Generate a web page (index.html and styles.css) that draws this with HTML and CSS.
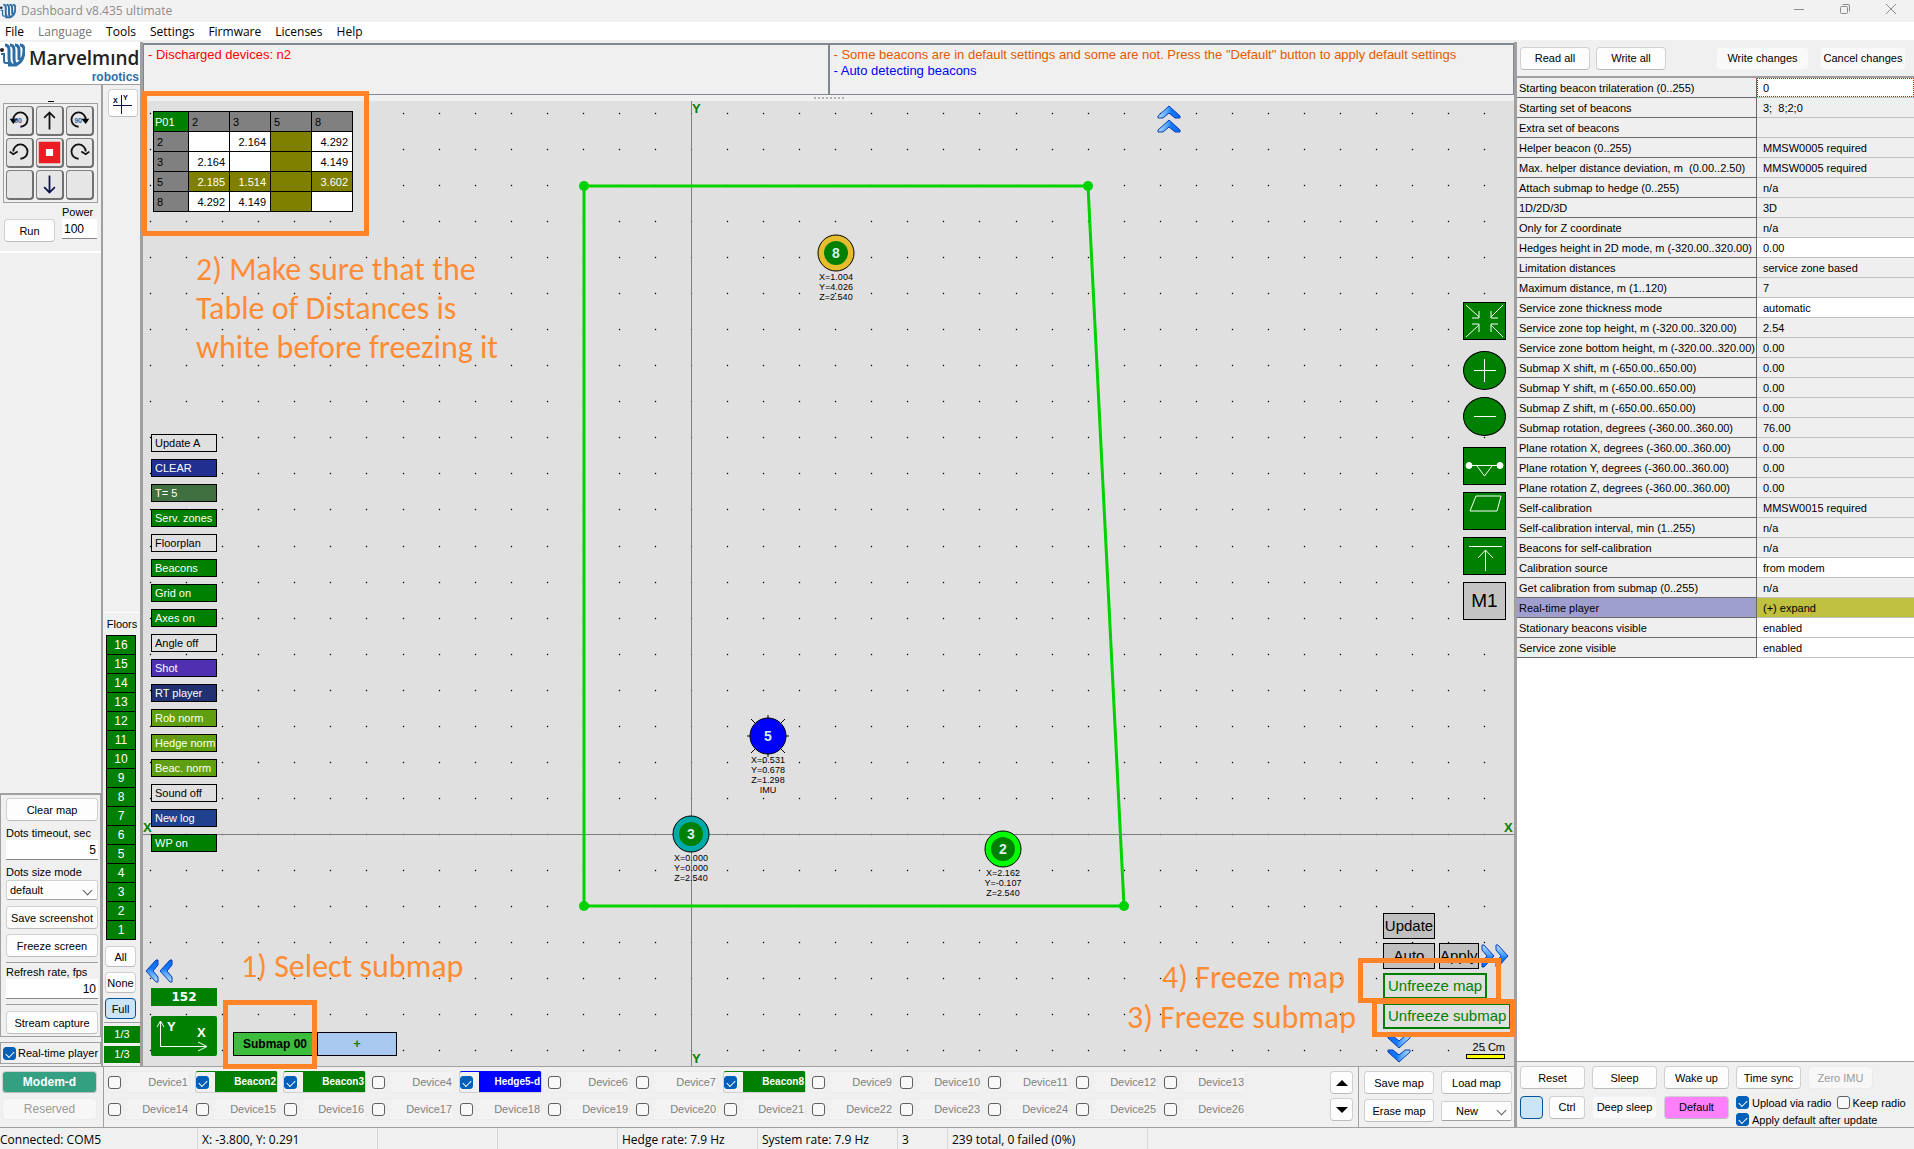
FILE: index.html
```html
<!DOCTYPE html>
<html lang="en">
<head>
    <meta charset="UTF-8">
    <meta name="viewport" content="width=device-width, initial-scale=1.0">
    <title>Dashboard v8.435 ultimate</title>
    <link rel="stylesheet" href="styles.css">
</head>
<body>

    <svg class="defs" aria-hidden="true">
        <linearGradient id="blue" x1="0" x2="1" y1="0" y2="0">
            <stop offset="0" stop-color="#b4dcff"/>
            <stop offset="0.45" stop-color="#4aa0ff"/>
            <stop offset="0.6" stop-color="#1478f5"/>
            <stop offset="1" stop-color="#0a6cff"/>
        </linearGradient>
        <symbol id="chevrons" viewBox="0 0 24 28">
            <path d="M1 11 L12 1 L23 11 V13 H18 L12 8 L6 13 H1 Z" fill="url(#blue)" stroke="#0a3cb4"/>
            <path d="M1 25 L12 15 L23 25 V27 H18 L12 22 L6 27 H1 Z" fill="url(#blue)" stroke="#0a3cb4"/>
        </symbol>
        <symbol id="logo" viewBox="0 0 25 24">
            <circle cx="2" cy="7" r="2" fill="#222"/>
            <path d="M1 11 H4 V18 Q4 20 6 20 H9" fill="none" stroke="#2f6ea5" stroke-width="2"/>
            <path d="M5 2 Q9 2 9 7 V15 Q9 21 12 21 M10 2 Q14 2 14 7 V15 Q14 21 17 21 M15 2 Q19 2 19 7 V17 M20 2 Q24 2 24 7 Q24 18 16 22 H8" fill="none" stroke="#2f6ea5" stroke-width="3"/>
        </symbol>
    </svg>

    <header class="titlebar">
        <svg class="title-icon"><use href="#logo"/></svg>
        <span class="title">Dashboard v8.435 ultimate</span>
        <button class="win-btn" aria-label="Minimize"><svg width="12" height="12"><path d="M1 6.5H11"/></svg></button>
        <button class="win-btn" aria-label="Restore"><svg width="12" height="12"><rect x="1.5" y="3.5" width="7" height="7" rx="1"/><path d="M3.500 1.500H9Q10.500 1.500 10.500 3V8.500"/></svg></button>
        <button class="win-btn" aria-label="Close"><svg width="12" height="12"><path d="M1 1L11 11M11 1L1 11"/></svg></button>
    </header>

    <nav class="menu">
        <a href="#">File</a>
        <a href="#" class="muted">Language</a>
        <a href="#">Tools</a>
        <a href="#">Settings</a>
        <a href="#">Firmware</a>
        <a href="#">Licenses</a>
        <a href="#">Help</a>
    </nav>

    <main class="main">
        <div class="work">
            <div class="upper">

                <aside class="sidebar">
                    <div class="brand">
                        <svg class="brand-icon"><use href="#logo"/></svg>
                        <div class="brand-name">Marvelmınd<small>robotics</small></div>
                    </div>
                    <div class="columns">
                        <div class="tools">
                            <div class="robot">
                                <div class="dash"></div>
                                <div class="pad">
                                    <button aria-label="Turn left 90"><svg viewBox="0 0 28 30"><path d="M7 14A8 8 0 1 1 15 22" class="arc"/><path d="M3 13H12L7 19Z"/><text x="8" y="18">90</text></svg></button>
                                    <button aria-label="Forward"><svg viewBox="0 0 28 30"><path d="M14 25V7M8 12L14 6L20 12" class="arc"/></svg></button>
                                    <button aria-label="Turn right 90"><svg viewBox="0 0 28 30"><path d="M21 14A8 8 0 1 0 13 22" class="arc"/><path d="M25 13H16L21 19Z"/><text x="8" y="18">90</text></svg></button>
                                    <button aria-label="Turn left"><svg viewBox="0 0 28 30"><path d="M7 14A8 8 0 1 1 15 22" class="arc"/><path d="M3 14L7 17L12 14" class="arc"/></svg></button>
                                    <button aria-label="Stop"><svg viewBox="0 0 28 30"><path d="M2 3H26V27H2Z" fill="#ed1c24"/><path d="M10 11H18V19H10Z" fill="#fff"/></svg></button>
                                    <button aria-label="Turn right"><svg viewBox="0 0 28 30"><path d="M21 14A8 8 0 1 0 13 22" class="arc"/><path d="M25 14L21 17L16 14" class="arc"/></svg></button>
                                    <button aria-label="Left"></button>
                                    <button aria-label="Back"><svg viewBox="0 0 28 30"><path d="M14 5V23M8 18L14 24L20 18" class="arc navy"/></svg></button>
                                    <button aria-label="Right"></button>
                                </div>
                                <div class="run">
                                    <label for="power">Power</label>
                                    <button class="btn">Run</button>
                                    <input id="power" type="text" value="100">
                                </div>
                            </div>
                            <div class="spacer"></div>
                            <div class="view">
                                <button class="btn">Clear map</button>
                                <label for="timeout">Dots timeout, sec</label>
                                <input id="timeout" type="text" value="5">
                                <label for="size">Dots size mode</label>
                                <div class="select"><select id="size"><option>default</option></select></div>
                                <button class="btn">Save screenshot</button>
                                <button class="btn">Freeze screen</button>
                                <hr>
                                <label for="rate">Refresh rate, fps</label>
                                <input id="rate" type="text" value="10">
                                <hr>
                                <button class="btn">Stream capture</button>
                            </div>
                            <label class="player"><input type="checkbox" checked> Real-time player</label>
                        </div>

                        <div class="floors">
                            <button class="btn axes-btn" aria-label="Axes"><svg width="28" height="26"><path d="M4 15.500H23M12.500 5V24" stroke="#101050"/><text x="4" y="13">X</text><text x="14" y="10">Y</text></svg></button>
                            <div class="spacer"></div>
                            <div class="floor-title">Floors</div>
                            <div class="floor-list">
                                <button>16</button>
                                <button>15</button>
                                <button>14</button>
                                <button>13</button>
                                <button>12</button>
                                <button>11</button>
                                <button>10</button>
                                <button>9</button>
                                <button>8</button>
                                <button>7</button>
                                <button>6</button>
                                <button>5</button>
                                <button>4</button>
                                <button>3</button>
                                <button>2</button>
                                <button>1</button>
                            </div>
                            <div class="floor-modes">
                                <button class="btn">All</button>
                                <button class="btn">None</button>
                                <button class="btn pressed">Full</button>
                            </div>
                            <div class="pages">
                                <span>1/3</span>
                                <span>1/3</span>
                            </div>
                        </div>
                    </div>
                </aside>

                <section class="center">
                    <div class="messages">
                        <div class="message red">- Discharged devices: n2</div>
                        <div class="message">
                            <p class="orange">- Some beacons are in default settings and some are not. Press the "Default" button to apply default settings</p>
                            <p class="blue">- Auto detecting beacons</p>
                        </div>
                    </div>
                    <div class="splitter"><i></i></div>

                    <div class="map">
                        <svg class="scene">
                            <path id="grid" fill="#000" stroke="#000" stroke-opacity="0.3"/>
                            <path d="M548.500 0V966M0 733.500H1371" stroke="#808080"/>
                            <path d="M441 85H945L981 805H441Z" fill="none" stroke="#00d200" stroke-width="3"/>
                            <g fill="#00d200">
                                <circle cx="441" cy="85" r="5"/>
                                <circle cx="945" cy="85" r="5"/>
                                <circle cx="981" cy="805" r="5"/>
                                <circle cx="441" cy="805" r="5"/>
                            </g>
                            <g class="beacon">
                                <circle cx="693" cy="152" r="18" fill="#e6bd2d" stroke="#000"/>
                                <circle cx="693" cy="152" r="12" fill="#008000"/>
                                <text x="693" y="157" class="num">8</text>
                                <text x="693" y="179">X=1.004</text>
                                <text x="693" y="189">Y=4.026</text>
                                <text x="693" y="199">Z=2.540</text>
                            </g>
                            <g class="beacon">
                                <path d="M604 635H646M625 614V656M608 618L642 652M642 618L608 652" stroke="#000"/>
                                <circle cx="625" cy="635" r="18" fill="#0000ff" stroke="#000"/>
                                <text x="625" y="640" class="num">5</text>
                                <text x="625" y="662">X=0.531</text>
                                <text x="625" y="672">Y=0.678</text>
                                <text x="625" y="682">Z=1.298</text>
                                <text x="625" y="692">IMU</text>
                            </g>
                            <g class="beacon">
                                <circle cx="548" cy="733" r="18" fill="#00aaaa" stroke="#000"/>
                                <circle cx="548" cy="733" r="12" fill="#008000"/>
                                <text x="548" y="738" class="num">3</text>
                                <text x="548" y="760">X=0.000</text>
                                <text x="548" y="770">Y=0.000</text>
                                <text x="548" y="780">Z=2.540</text>
                            </g>
                            <g class="beacon">
                                <circle cx="860" cy="748" r="18" fill="#00ff00" stroke="#000"/>
                                <circle cx="860" cy="748" r="12" fill="#008000"/>
                                <text x="860" y="753" class="num">2</text>
                                <text x="860" y="775">X=2.162</text>
                                <text x="860" y="785">Y=-0.107</text>
                                <text x="860" y="795">Z=2.540</text>
                            </g>
                            <g class="axis">
                                <text x="549" y="12">Y</text>
                                <text x="549" y="962">Y</text>
                                <text x="0" y="731">X</text>
                                <text x="1361" y="731">X</text>
                            </g>
                        </svg>

                        <table class="distances">
                            <tr><th class="corner">P01</th><th>2</th><th>3</th><th>5</th><th>8</th></tr>
                            <tr><th>2</th><td></td><td>2.164</td><td class="off"></td><td>4.292</td></tr>
                            <tr><th>3</th><td>2.164</td><td></td><td class="off"></td><td>4.149</td></tr>
                            <tr><th>5</th><td class="off">2.185</td><td class="off">1.514</td><td class="off"></td><td class="off">3.602</td></tr>
                            <tr><th>8</th><td>4.292</td><td>4.149</td><td class="off"></td><td></td></tr>
                        </table>

                        <button class="scroll up" aria-label="Scroll up"><svg width="24" height="28"><use href="#chevrons"/></svg></button>
                        <button class="scroll left" aria-label="Scroll left"><svg width="28" height="24"><g transform="translate(0 24) rotate(-90)"><use href="#chevrons" width="24" height="28"/></g></svg></button>
                        <button class="scroll down" aria-label="Scroll down"><svg width="24" height="28"><g transform="translate(24 28) rotate(180)"><use href="#chevrons" width="24" height="28"/></g></svg></button>

                        <div class="modes">
                            <button>Update A</button>
                            <button class="c-clear">CLEAR</button>
                            <button class="c-time">T= 5</button>
                            <button class="c-green">Serv. zones</button>
                            <button>Floorplan</button>
                            <button class="c-green">Beacons</button>
                            <button class="c-green">Grid on</button>
                            <button class="c-green">Axes on</button>
                            <button>Angle off</button>
                            <button class="c-shot">Shot</button>
                            <button class="c-rt">RT player</button>
                            <button class="c-norm">Rob norm</button>
                            <button class="c-norm">Hedge norm</button>
                            <button class="c-norm">Beac. norm</button>
                            <button>Sound off</button>
                            <button class="c-log">New log</button>
                            <button class="c-green">WP on</button>
                        </div>

                        <div class="bottom-left">
                            <div class="orient">
                                <span class="counter">152</span>
                                <button class="orient-btn" aria-label="Axes orientation">
                                    <svg width="65" height="40"><path d="M9.500 5V30.500H56M6 11L9.500 5L13 11M47 26L56 30.500L47 35" fill="none" stroke="#fff"/><text x="16" y="15">Y</text><text x="46" y="21">X</text></svg>
                                </button>
                            </div>
                            <button class="submap">Submap 00</button>
                            <button class="submap add">+</button>
                        </div>

                        <div class="side-tools">
                            <button aria-label="Fit"><svg width="41" height="36"><path d="M2 2L15 14M8 15H15V8M39 2L27 14M27 8V15H34M2 34L15 22M8 21H15V29M39 34L27 22M34 21H27V29"/></svg></button>
                            <button class="round" aria-label="Zoom in"><svg width="41" height="37"><path d="M10 18.500H32M20.500 7V30"/></svg></button>
                            <button class="round" aria-label="Zoom out"><svg width="41" height="37"><path d="M10 18.500H32"/></svg></button>
                            <button aria-label="Measure"><svg width="41" height="36"><path d="M5 17.500H36M13 18L20.500 28L28 18"/><circle cx="5" cy="17.500" r="3" fill="#fff"/><circle cx="36" cy="17.500" r="3" fill="#fff"/></svg></button>
                            <button aria-label="Plane"><svg width="41" height="36"><path d="M12 3H37L33 18H6Z"/></svg></button>
                            <button aria-label="Move up"><svg width="41" height="36"><path d="M5 8.500H38M21.500 33V12M14 20L21.500 12L29 20"/></svg></button>
                            <button class="m1">M1</button>
                        </div>

                        <div class="freeze">
                            <div class="row"><button class="wide">Update</button></div>
                            <div class="row">
                                <button class="wide">Auto</button>
                                <button>Apply</button>
                                <button class="scroll" aria-label="Scroll right"><svg width="28" height="24"><g transform="translate(28 0) rotate(90)"><use href="#chevrons" width="24" height="28"/></g></svg></button>
                            </div>
                            <div class="row"><button class="frozen">Unfreeze map</button></div>
                            <div class="row"><button class="frozen">Unfreeze submap</button></div>
                        </div>

                        <div class="scale">25 Cm<i></i></div>

                        <div class="frame frame-table"></div>
                        <div class="frame frame-submap"></div>
                        <div class="frame frame-map"></div>
                        <div class="frame frame-freeze"></div>
                        <p class="note note-table">2) Make sure that the<br>Table of Distances is<br>white before freezing it</p>
                        <p class="note note-select">1) Select submap</p>
                        <p class="note note-map">4) Freeze map</p>
                        <p class="note note-submap">3) Freeze submap</p>
                    </div>
                </section>
            </div>

            <footer class="devices">
                <div class="modem">
                    <button class="btn modem-on">Modem-d</button>
                    <button class="btn" disabled>Reserved</button>
                </div>
                <div class="device-grid">
                    <label class="device"><input type="checkbox"><span>Device1</span></label>
                    <label class="device on"><input type="checkbox" checked><span>Beacon2</span></label>
                    <label class="device on"><input type="checkbox" checked><span>Beacon3</span></label>
                    <label class="device"><input type="checkbox"><span>Device4</span></label>
                    <label class="device on hedge"><input type="checkbox" checked><span>Hedge5-d</span></label>
                    <label class="device"><input type="checkbox"><span>Device6</span></label>
                    <label class="device"><input type="checkbox"><span>Device7</span></label>
                    <label class="device on"><input type="checkbox" checked><span>Beacon8</span></label>
                    <label class="device"><input type="checkbox"><span>Device9</span></label>
                    <label class="device"><input type="checkbox"><span>Device10</span></label>
                    <label class="device"><input type="checkbox"><span>Device11</span></label>
                    <label class="device"><input type="checkbox"><span>Device12</span></label>
                    <label class="device"><input type="checkbox"><span>Device13</span></label>
                    <label class="device"><input type="checkbox"><span>Device14</span></label>
                    <label class="device"><input type="checkbox"><span>Device15</span></label>
                    <label class="device"><input type="checkbox"><span>Device16</span></label>
                    <label class="device"><input type="checkbox"><span>Device17</span></label>
                    <label class="device"><input type="checkbox"><span>Device18</span></label>
                    <label class="device"><input type="checkbox"><span>Device19</span></label>
                    <label class="device"><input type="checkbox"><span>Device20</span></label>
                    <label class="device"><input type="checkbox"><span>Device21</span></label>
                    <label class="device"><input type="checkbox"><span>Device22</span></label>
                    <label class="device"><input type="checkbox"><span>Device23</span></label>
                    <label class="device"><input type="checkbox"><span>Device24</span></label>
                    <label class="device"><input type="checkbox"><span>Device25</span></label>
                    <label class="device"><input type="checkbox"><span>Device26</span></label>
                </div>
                <div class="arrows">
                    <button class="btn" aria-label="Previous devices"><svg width="12" height="8"><path d="M0 7L6 1L12 7Z"/></svg></button>
                    <button class="btn" aria-label="Next devices"><svg width="12" height="8"><path d="M0 1L6 7L12 1Z"/></svg></button>
                </div>
                <div class="map-actions">
                    <button class="btn">Save map</button>
                    <button class="btn">Load map</button>
                    <button class="btn">Erase map</button>
                    <div class="select"><select aria-label="Map"><option>New</option></select></div>
                </div>
            </footer>
        </div>

        <aside class="settings">
            <div class="settings-top">
                <button class="btn">Read all</button>
                <button class="btn">Write all</button>
                <button class="btn flat write">Write changes</button>
                <button class="btn flat cancel">Cancel changes</button>
            </div>
            <div class="params">
                <table>
                    <tr><th><label for="start">Starting beacon trilateration (0..255)</label></th><td class="edit"><input id="start" type="text" value="0"></td></tr>
                    <tr><th>Starting set of beacons</th><td>3;&nbsp; 8;2;0</td></tr>
                    <tr><th>Extra set of beacons</th><td></td></tr>
                    <tr><th>Helper beacon (0..255)</th><td>MMSW0005 required</td></tr>
                    <tr><th>Max. helper distance deviation, m&nbsp; (0.00..2.50)</th><td>MMSW0005 required</td></tr>
                    <tr><th>Attach submap to hedge (0..255)</th><td>n/a</td></tr>
                    <tr><th>1D/2D/3D</th><td>3D</td></tr>
                    <tr><th>Only for Z coordinate</th><td>n/a</td></tr>
                    <tr><th>Hedges height in 2D mode, m (-320.00..320.00)</th><td class="edit">0.00</td></tr>
                    <tr><th>Limitation distances</th><td>service zone based</td></tr>
                    <tr><th>Maximum distance, m (1..120)</th><td>7</td></tr>
                    <tr><th>Service zone thickness mode</th><td class="edit">automatic</td></tr>
                    <tr><th>Service zone top height, m (-320.00..320.00)</th><td>2.54</td></tr>
                    <tr><th>Service zone bottom height, m (-320.00..320.00)</th><td>0.00</td></tr>
                    <tr><th>Submap X shift, m (-650.00..650.00)</th><td>0.00</td></tr>
                    <tr><th>Submap Y shift, m (-650.00..650.00)</th><td>0.00</td></tr>
                    <tr><th>Submap Z shift, m (-650.00..650.00)</th><td>0.00</td></tr>
                    <tr><th>Submap rotation, degrees (-360.00..360.00)</th><td>76.00</td></tr>
                    <tr><th>Plane rotation X, degrees (-360.00..360.00)</th><td>0.00</td></tr>
                    <tr><th>Plane rotation Y, degrees (-360.00..360.00)</th><td>0.00</td></tr>
                    <tr><th>Plane rotation Z, degrees (-360.00..360.00)</th><td>0.00</td></tr>
                    <tr><th>Self-calibration</th><td>MMSW0015 required</td></tr>
                    <tr><th>Self-calibration interval, min (1..255)</th><td>n/a</td></tr>
                    <tr><th>Beacons for self-calibration</th><td>n/a</td></tr>
                    <tr><th>Calibration source</th><td class="edit">from modem</td></tr>
                    <tr><th>Get calibration from submap (0..255)</th><td>n/a</td></tr>
                    <tr class="group"><th>Real-time player</th><td>(+) expand</td></tr>
                    <tr><th>Stationary beacons visible</th><td class="edit">enabled</td></tr>
                    <tr><th>Service zone visible</th><td class="edit">enabled</td></tr>
                </table>
            </div>
            <div class="commands">
                <button class="btn">Reset</button>
                <button class="btn">Sleep</button>
                <button class="btn">Wake up</button>
                <button class="btn">Time sync</button>
                <button class="btn" disabled>Zero IMU</button>
                <div class="pair">
                    <button class="btn pressed" aria-label="Mode"></button>
                    <button class="btn">Ctrl</button>
                </div>
                <button class="btn flat">Deep sleep</button>
                <button class="btn pink">Default</button>
                <div class="options">
                    <label><input type="checkbox" checked> Upload via radio</label>
                    <label><input type="checkbox"> Keep radio</label>
                    <label><input type="checkbox" checked> Apply default after update</label>
                </div>
            </div>
        </aside>
    </main>

    <footer class="status">
        <span class="s1">Connected: COM5</span>
        <span class="s2">X: -3.800, Y: 0.291</span>
        <span class="s3"></span>
        <span class="s3"></span>
        <span class="s4">Hedge rate: 7.9 Hz</span>
        <span class="s4">System rate: 7.9 Hz</span>
        <span class="s5">3</span>
        <span class="s6">239 total, 0 failed (0%)</span>
    </footer>

    <script>
        // grid dots every 25 cm around the origin
        const origin = { x: 548, y: 733 };
        const step = 36.06;
        let d = '';
        for (let i = -15; i <= 22; i++) {
            for (let j = -20; j <= 6; j++) {
                const x = origin.x + Math.round(i * step);
                const y = origin.y + Math.round(j * step);
                d += `M${x} ${y}h1v1h-1z`;
            }
        }
        document.getElementById('grid').setAttribute('d', d);
    </script>

</body>
</html>
```
FILE: styles.css
```css
* {
    box-sizing: border-box;
}

body {
    margin: 0;
    height: 100vh;
    display: flex;
    flex-direction: column;
    overflow: hidden;
    background: #f0f0f0;
    color: #000;
    font: 11px/14px "Liberation Sans", Arial, sans-serif;
}

p {
    margin: 0;
}

button, input, select {
    margin: 0;
    padding: 0;
    font: inherit;
    color: inherit;
}

button {
    white-space: nowrap;
}

.defs {
    position: absolute;
    width: 0;
    height: 0;
}

.spacer {
    flex: 1;
}

/* shared controls */

.btn {
    height: 23px;
    background: #fdfdfd;
    border: 1px solid #d0d0d0;
    border-bottom-color: #bcbcbc;
    border-radius: 4px;
    display: flex;
    align-items: center;
    justify-content: center;
}

.btn:disabled {
    background: #f7f7f7;
    border-color: #ececec;
    color: #9a9a9a;
}

.btn.flat {
    background: #f9f9f9;
    border-color: #f2f2f2;
}

.btn.pressed {
    background: #cce4f7;
    border-color: #005499;
}

input[type="text"] {
    width: 100%;
    height: 20px;
    padding: 0 2px;
    border: 0;
    border-bottom: 1px solid #868686;
    background: #fff;
    font-size: 12px;
}

input[type="checkbox"] {
    appearance: none;
    flex: none;
    width: 13px;
    height: 13px;
    border: 1px solid #606060;
    border-radius: 3px;
    background: #f8f8f8;
    display: grid;
    place-items: center;
}

input[type="checkbox"]:checked {
    background: #005fb8;
    border-color: #005fb8;
}

input[type="checkbox"]:checked::after {
    content: "";
    width: 7px;
    height: 4px;
    border: solid #fff;
    border-width: 0 0 1px 1px;
    transform: rotate(-45deg);
}

.select {
    display: flex;
    align-items: center;
    position: relative;
}

.select::after {
    content: "";
    position: absolute;
    right: 7px;
    width: 6px;
    height: 6px;
    border: solid #606060;
    border-width: 0 1px 1px 0;
    transform: rotate(45deg);
    pointer-events: none;
}

.select select {
    appearance: none;
    width: 100%;
    height: 20px;
    padding: 0 3px;
    border: 1px solid #d0d0d0;
    border-bottom-color: #a0a0a0;
    background: #fdfdfd;
    border-radius: 2px;
}

/* title and menu */

.titlebar {
    height: 22px;
    display: flex;
    align-items: center;
    background: #f2f2f2;
    color: #8c8c8c;
    font: 12px/20px "Open Sans", sans-serif;
}

.title-icon {
    width: 16px;
    height: 16px;
}

.title {
    flex: 1;
    padding-left: 5px;
}

.win-btn {
    width: 46px;
    height: 20px;
    border: 0;
    background: none;
}

.win-btn svg {
    fill: none;
    stroke: #8c8c8c;
}

.menu {
    height: 20px;
    display: flex;
    gap: 14px;
    padding-left: 5px;
    background: #fff;
    border-bottom: 2px solid #f0f0f0;
    font: 12px/19px "Open Sans", sans-serif;
}

.menu a {
    color: #000;
    text-decoration: none;
}

.menu .muted {
    color: #777;
}

/* page frame */

.main {
    flex: 1;
    min-height: 0;
    display: flex;
    border-bottom: 1px solid #a0a0a0;
}

.work {
    flex: 1;
    min-width: 0;
    display: flex;
    flex-direction: column;
}

.upper {
    flex: 1;
    min-height: 0;
    display: flex;
}

.sidebar {
    width: 143px;
    display: flex;
    flex-direction: column;
    border-right: 3px solid #a0a0a0;
}

.brand {
    height: 43px;
    padding-top: 1px;
    display: flex;
    gap: 4px;
    background: #fff;
    border-bottom: 1px solid #a0a0a0;
}

.brand-icon {
    width: 25px;
    height: 24px;
}

.brand-name {
    flex: 1;
    padding-top: 2px;
    font: 600 19px/26px "Open Sans", sans-serif;
    color: #222;
}

.brand-name small {
    display: block;
    padding-right: 1px;
    text-align: right;
    font: bold 12px/13px "Liberation Sans", Arial, sans-serif;
    color: #2f6ea5;
}

.columns {
    flex: 1;
    display: flex;
}

.tools {
    width: 103px;
    display: flex;
    flex-direction: column;
    border-right: 2px solid #a0a0a0;
}

.robot {
    padding: 16px 3px 7px;
    border-bottom: 2px solid #fff;
}

.dash {
    width: 6px;
    height: 1px;
    margin: 0 auto 1px;
    background: #000;
}

.pad {
    display: grid;
    grid-template-columns: repeat(3, 28px);
    grid-auto-rows: 30px;
    gap: 2px;
    padding: 2px;
    border: 1px solid #a0a0a0;
}

.pad button {
    border: 1px solid #808080;
    border-bottom: 2px solid #707070;
    border-right: 2px solid #707070;
    border-radius: 4px;
    background: #e6e6e6;
    overflow: hidden;
}

.pad svg {
    display: block;
    width: 100%;
    height: 100%;
}

.pad .arc {
    fill: none;
    stroke: #111;
    stroke-width: 2;
}

.pad .navy {
    stroke: #101050;
}

.pad text {
    font-size: 8px;
    font-weight: bold;
    fill: #2a6aa0;
}

.run {
    display: grid;
    grid-template-columns: 51px 35px;
    column-gap: 7px;
    padding: 2px 1px;
}

.run label {
    grid-column: 2;
}

.view {
    display: flex;
    flex-direction: column;
    padding: 3px 2px 2px 5px;
    border: 1px solid #a0a0a0;
    border-top-width: 2px;
}

.view label {
    padding-top: 6px;
    line-height: 13px;
}

.view input {
    text-align: right;
}

.view .select {
    margin: 1px 0 6px;
}

.view .btn + .btn {
    margin-top: 5px;
}

.view hr {
    width: 100%;
    margin: 5px 0 0;
    border: 0;
    border-top: 1px solid #a0a0a0;
}

.view hr + label {
    padding-top: 3px;
}

.view hr + .btn {
    margin-top: 6px;
}

.player {
    display: flex;
    align-items: center;
    gap: 2px;
    height: 22px;
    margin: 5px 0 2px;
    padding-left: 2px;
    border: 1px solid #a0a0a0;
    white-space: nowrap;
}

.floors {
    flex: 1;
    display: flex;
    flex-direction: column;
    padding: 4px 1px 0;
}

.axes-btn {
    height: 28px;
    margin: 0 2px 0 4px;
}

.axes-btn text {
    font: bold 8px "Liberation Mono", monospace;
    fill: #101050;
}

.floor-title {
    padding: 4px 0;
    border-top: 1px solid #fff;
    text-align: center;
}

.floor-list {
    display: flex;
    flex-direction: column;
    width: 30px;
    margin-left: 2px;
    border: 1px solid #000;
    border-bottom: 0;
}

.floor-list button {
    height: 19px;
    border: 0;
    border-bottom: 1px solid #000;
    background: #008000;
    color: #fff;
    font-size: 12px;
}

.floor-modes {
    display: flex;
    flex-direction: column;
    gap: 5px;
    width: 32px;
    padding: 6px 0 3px 1px;
}

.floor-modes .btn {
    height: 21px;
}

.pages {
    display: flex;
    flex-direction: column;
    gap: 3px;
    padding: 3px 0;
    border-top: 1px solid #a0a0a0;
    text-align: center;
    color: #fff;
}

.pages span {
    height: 17px;
    background: #008000;
    line-height: 17px;
}

/* messages */

.center {
    flex: 1;
    min-width: 0;
    display: flex;
    flex-direction: column;
    padding-top: 1px;
}

.messages {
    display: grid;
    grid-template-columns: 1fr 1fr;
    height: 52px;
}

.message {
    padding: 2px 4px;
    border: 1px solid #828790;
    border-top-width: 2px;
    font-size: 13px;
    line-height: 16px;
    white-space: nowrap;
}

.red { color: #ff0000; }
.orange { color: #e35a00; }
.blue { color: #0000ff; }

.splitter {
    height: 6px;
    display: flex;
    align-items: center;
    justify-content: center;
}

.splitter i {
    width: 30px;
    height: 2px;
    background: repeating-linear-gradient(90deg, #b0b0b0 0 2px, transparent 2px 4px);
}

/* map */

.map {
    position: relative;
    flex: 1;
    background: #e0e0e0;
}

.scene {
    display: block;
    position: absolute;
    width: 100%;
    height: 100%;
}

.beacon text {
    font-size: 9px;
    text-anchor: middle;
}

.beacon .num {
    font-size: 14px;
    font-weight: bold;
    fill: #d8f0f0;
}

.axis text {
    font-size: 13px;
    font-weight: bold;
    fill: #008000;
}

.distances {
    position: absolute;
    left: 10px;
    top: 10px;
    border-collapse: collapse;
    background: #fff;
}

.distances th, .distances td {
    width: 41px;
    height: 20px;
    padding: 0 4px;
    border: 1px solid #000;
    text-align: right;
}

.distances th {
    background: #808080;
    font-weight: normal;
    text-align: left;
    padding: 0 3px;
}

.distances th:first-child {
    width: 35px;
}

.distances .corner {
    background: #008000;
    color: #fff;
    padding: 0 1px;
}

.distances .off {
    background: #808000;
    color: #fff;
}

.scroll {
    border: 0;
    background: none;
}

.scroll svg {
    display: block;
}

.up, .left, .down {
    position: absolute;
}

.up {
    left: 1014px;
    top: 4px;
}

.left {
    left: 2px;
    bottom: 83px;
}

.down {
    right: 103px;
    bottom: 3px;
}

.modes {
    position: absolute;
    left: 8px;
    top: 333px;
    width: 66px;
    display: flex;
    flex-direction: column;
    gap: 7px;
}

.modes button {
    height: 18px;
    padding-left: 3px;
    border: 1px solid #000;
    background: #e0e0e0;
    text-align: left;
    line-height: 14px;
}

.modes .c-clear { background: #202f90; color: #fff; }
.modes .c-time { background: #407040; color: #fff; }
.modes .c-green { background: #008000; color: #fff; }
.modes .c-shot { background: #5030b0; color: #fff; }
.modes .c-rt { background: #203070; color: #fff; }
.modes .c-norm { background: #60a010; color: #fff; }
.modes .c-log { background: #204090; color: #fff; }

.bottom-left {
    position: absolute;
    left: 8px;
    bottom: 10px;
    display: flex;
    align-items: flex-end;
}

.orient {
    display: flex;
    flex-direction: column;
    gap: 10px;
    width: 66px;
    margin-right: 16px;
}

.counter {
    height: 18px;
    background: #008000;
    color: #fff;
    font: bold 12px/18px "DejaVu Sans", sans-serif;
    text-align: center;
}

.orient-btn {
    height: 40px;
    border: 0;
    border-radius: 2px;
    background: #008000;
}

.orient-btn svg {
    display: block;
}

.orient-btn text {
    font-size: 13px;
    font-weight: bold;
    fill: #fff;
}

.submap {
    width: 84px;
    height: 24px;
    border: 1px solid #000;
    background: #3cbe3c;
    font: bold 12px "Liberation Sans", Arial, sans-serif;
}

.submap.add {
    width: 80px;
    background: #a8c8f0;
    color: #008000;
}

.side-tools {
    position: absolute;
    right: 8px;
    top: 201px;
    width: 43px;
    display: flex;
    flex-direction: column;
    gap: 7px;
}

.side-tools button {
    height: 38px;
    border: 1px solid #000;
    background: #008000;
}

.side-tools .round {
    height: 39px;
    margin: 4px 0 0;
    border-radius: 50%;
}

.side-tools .round + .round {
    margin: 0 0 4px;
}

.side-tools svg {
    display: block;
    fill: none;
    stroke: #fff;
}

.side-tools .m1 {
    background: #c4c4c4;
    font-size: 19px;
}

.freeze {
    position: absolute;
    right: 3px;
    bottom: 37px;
    width: 128px;
    display: flex;
    flex-direction: column;
    gap: 4px;
}

.freeze .row {
    display: flex;
    gap: 4px;
}

.freeze button {
    height: 26px;
    border: 1px solid #000;
    background: #c0c0c0;
    font-size: 15px;
}

.freeze .wide {
    width: 52px;
}

.freeze .scroll {
    margin-left: -2px;
    border: 0;
    background: none;
}

.freeze .frozen {
    padding: 0 3px;
    border: 2px solid #008000;
    background: #e0e0e0;
    color: #008000;
}

.scale {
    position: absolute;
    right: 9px;
    bottom: 7px;
    width: 39px;
    text-align: right;
    line-height: 13px;
}

.scale i {
    display: block;
    height: 5px;
    background: #ffff00;
    border: 1px solid #000;
}

.frame {
    position: absolute;
    border: 5px solid #ff8427;
    pointer-events: none;
}

.frame-table {
    left: -1px;
    top: -10px;
    width: 227px;
    height: 145px;
}

.frame-submap {
    left: 80px;
    bottom: -3px;
    width: 94px;
    height: 69px;
}

.frame-map {
    right: 13px;
    bottom: 63px;
    width: 143px;
    height: 45px;
}

.frame-freeze {
    right: -1px;
    bottom: 29px;
    width: 143px;
    height: 38px;
}

.note {
    position: absolute;
    color: #ff8c35;
    font: 32px/39px Carlito, Lato, sans-serif;
    white-space: nowrap;
}

.note-table {
    left: 53px;
    top: 149px;
}

.note-select {
    left: 98px;
    bottom: 80px;
}

.note-map {
    right: 169px;
    bottom: 69px;
}

.note-submap {
    right: 158px;
    bottom: 29px;
}

/* devices */

.devices {
    height: 61px;
    display: flex;
    border-top: 1px solid #a0a0a0;
}

.modem {
    width: 104px;
    display: flex;
    flex-direction: column;
    gap: 5px;
    padding: 4px 6px 0 2px;
    border-right: 1px solid #a0a0a0;
}

.modem .btn {
    height: 22px;
    font-size: 12px;
}

.modem .modem-on {
    background: #32a081;
    color: #fff;
    font-weight: bold;
}

.device-grid {
    flex: 1;
    display: grid;
    grid-template-columns: repeat(13, 83px);
    grid-auto-rows: 22px;
    gap: 5px;
    padding: 4px 3px;
}

.device {
    display: flex;
    align-items: center;
    gap: 6px;
    border: 1px solid #ececec;
    border-radius: 3px;
    color: #808080;
}

.device span {
    flex: 1;
    padding-right: 1px;
    text-align: right;
    line-height: 20px;
    background: #f3f3f3;
}

.device.on {
    border-color: #008000 #d0d0d0 #d0d0d0;
}

.device.on span {
    background: #008000;
    color: #fff;
    font-size: 10px;
    font-weight: bold;
}

.device.hedge {
    border-top-color: #0000ff;
}

.device.hedge span {
    background: #0000ff;
}

.arrows {
    width: 29px;
    display: flex;
    flex-direction: column;
    gap: 4px;
    padding: 4px 5px 0 0;
    border-right: 1px solid #a0a0a0;
}

.map-actions {
    width: 155px;
    display: grid;
    grid-template-columns: 70px 71px;
    grid-auto-rows: 23px;
    gap: 5px 7px;
    padding: 4px 0 0 5px;
}

.map-actions .select select {
    padding-left: 14px;
}

/* settings */

.settings {
    width: 400px;
    display: flex;
    flex-direction: column;
    border-left: 3px solid #a0a0a0;
}

.settings-top {
    height: 36px;
    display: flex;
    align-items: center;
    gap: 6px;
    padding: 0 8px 2px 3px;
    border-bottom: 2px solid #a0a0a0;
}

.settings-top .btn {
    width: 70px;
}

.settings-top .write {
    width: 93px;
    margin-left: auto;
}

.settings-top .cancel {
    width: 86px;
    margin-left: 5px;
}

.params {
    flex: 1;
    background: #fff;
}

.params table {
    width: 100%;
    border-spacing: 0;
    table-layout: fixed;
}

.params th, .params td {
    height: 20px;
    padding: 0 0 0 6px;
    background: #efefef;
    border-bottom: 1px solid #c0c0c0;
    text-align: left;
    font-weight: normal;
    line-height: 18px;
    white-space: nowrap;
}

.params th {
    width: 240px;
    padding-left: 2px;
    border-right: 1px solid #696969;
    border-bottom-color: #696969;
}

.params .edit {
    background: #fff;
}

.params td:has(input) {
    padding: 0;
}

.params input {
    display: block;
    height: 19px;
    padding: 0 5px;
    border: 1px dotted #ff0000;
    font-size: 11px;
}

.params .group th {
    background: #9f9fcf;
}

.params .group td {
    background: #bfbf40;
}

.commands {
    display: grid;
    grid-template-columns: repeat(5, 65px) 1fr;
    gap: 5px 7px;
    height: 66px;
    padding: 4px 0 0 3px;
    border-top: 1px solid #a0a0a0;
}

.commands > :nth-child(6) {
    grid-column: 1;
}

.pair {
    display: grid;
    grid-template-columns: 23px 36px;
    gap: 6px;
}

.pink {
    background: #ff80ff;
}

.options {
    grid-column: 4 / -1;
    display: flex;
    flex-wrap: wrap;
    gap: 2px 5px;
}

.options label {
    display: flex;
    align-items: center;
    gap: 3px;
    white-space: nowrap;
}

/* status bar */

.status {
    height: 21px;
    display: flex;
    font: 12px/18px "Open Sans", sans-serif;
}

.status span {
    padding: 3px 0 0 4px;
    border-right: 1px solid #d7d7d7;
    white-space: nowrap;
}

.status .s1 { width: 198px; padding-left: 0; }
.status .s2 { width: 180px; }
.status .s3 { width: 120px; }
.status .s4 { width: 140px; }
.status .s5 { width: 50px; }
.status .s6 { width: 200px; }
```
